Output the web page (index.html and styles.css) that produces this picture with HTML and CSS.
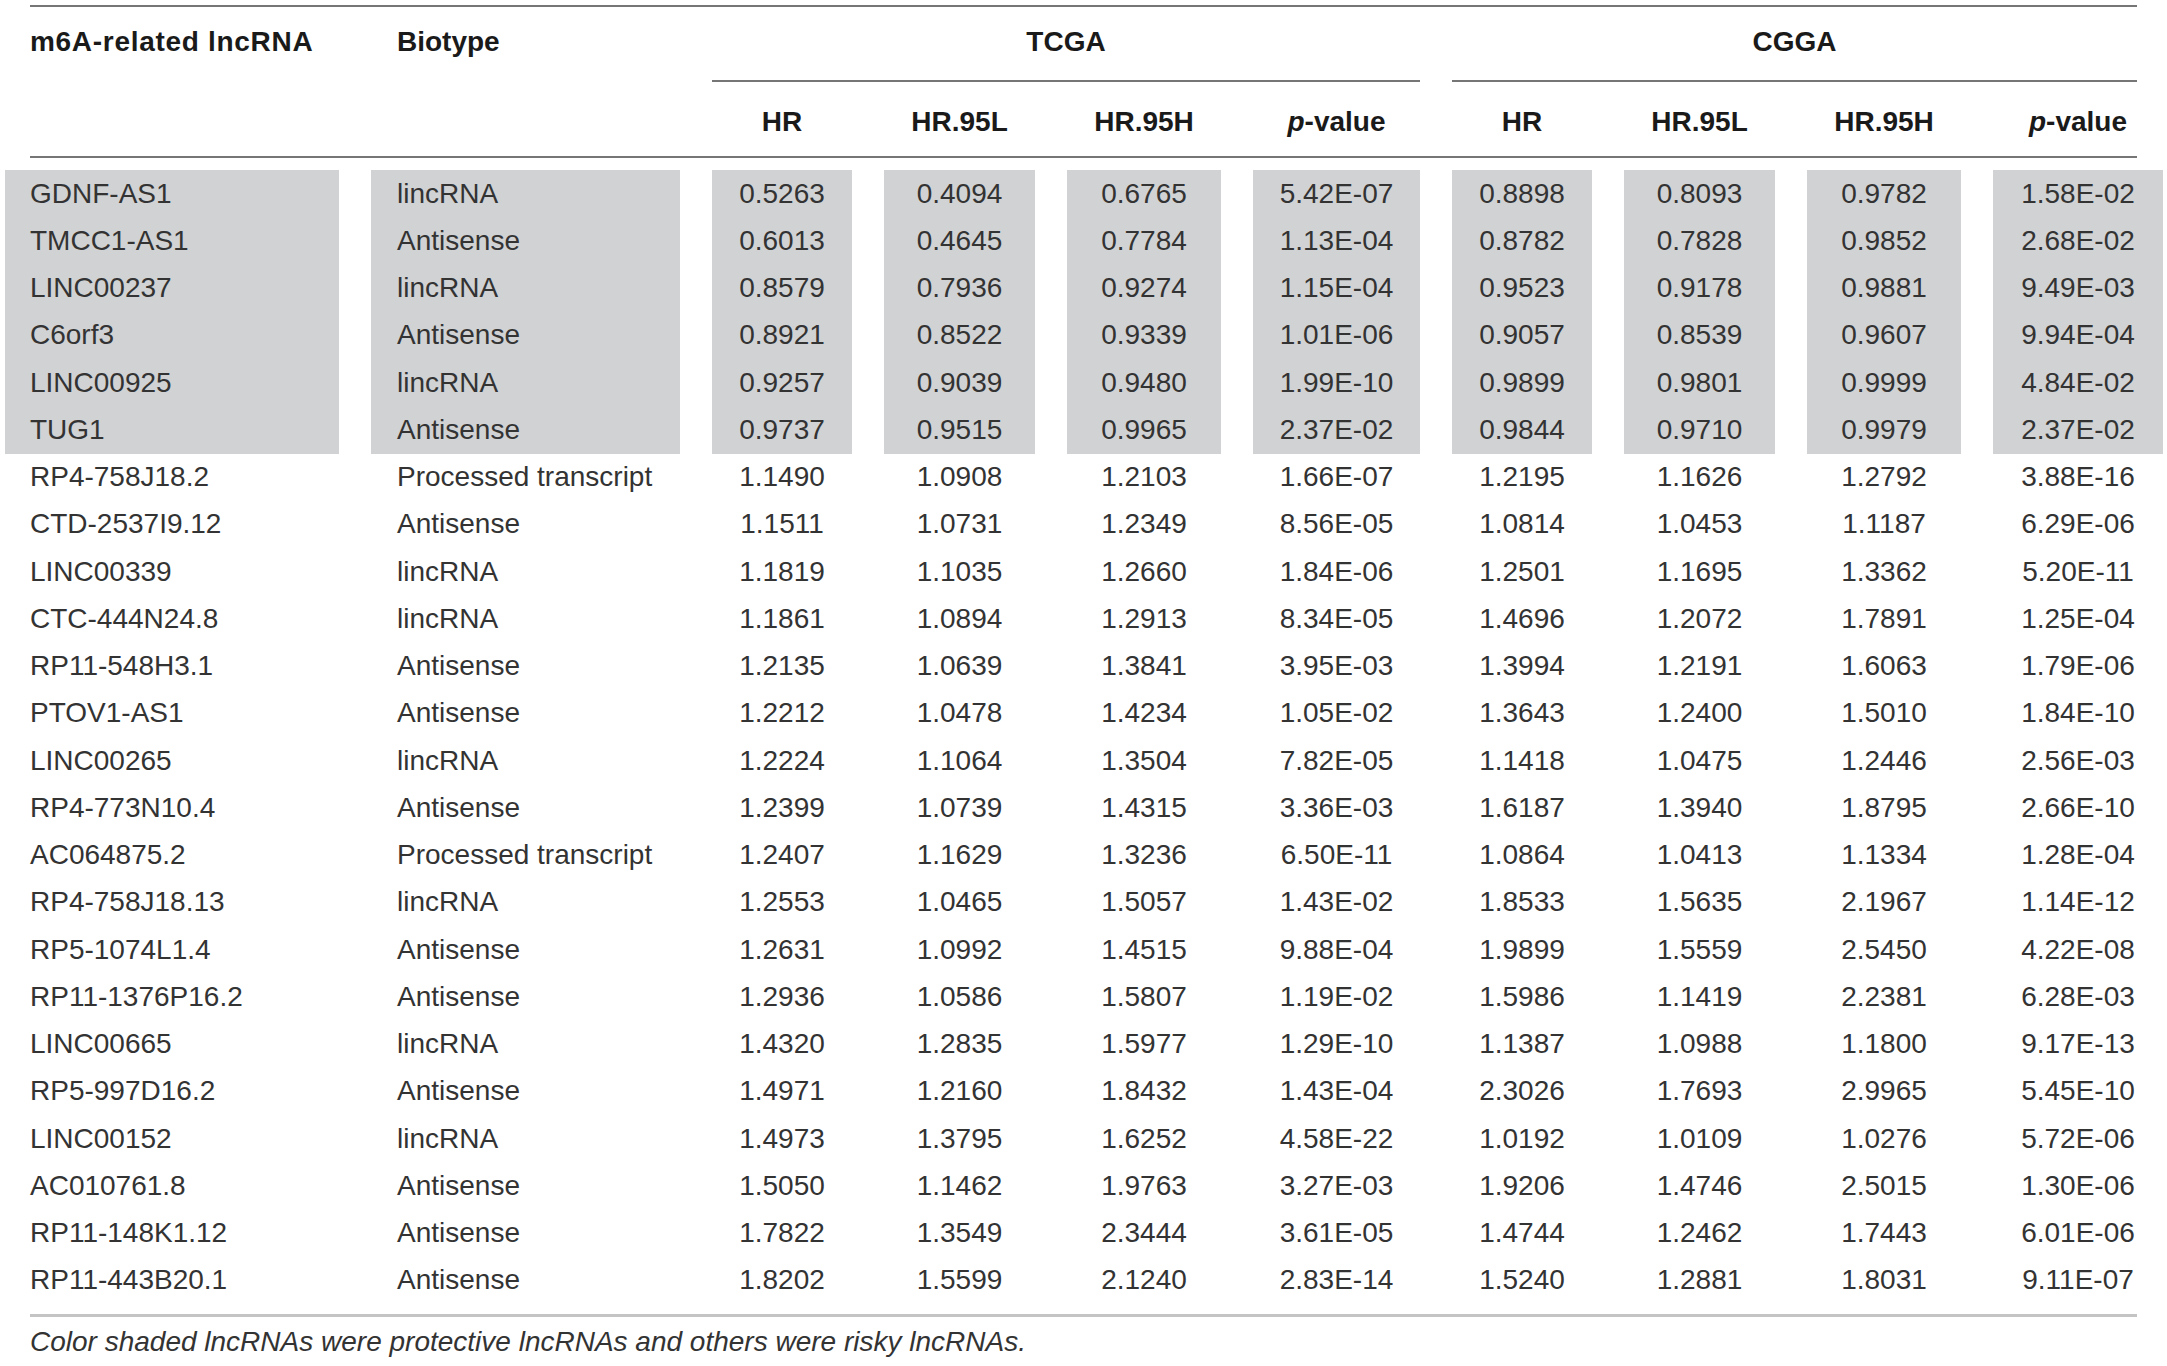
FILE: index.html
```html
<!DOCTYPE html>
<html lang="en">
<head>
<meta charset="utf-8">
<title>m6A-related lncRNA table</title>
<link rel="stylesheet" href="styles.css">
</head>
<body>
<div class="tbl">
  <div class="rule rule-top"></div>
  <div class="row head1">
    <div class="cell name wide">m6A-related lncRNA</div>
    <div class="cell bio">Biotype</div>
    <div class="cell grp tcga">TCGA</div>
    <div class="cell grp cgga">CGGA</div>
  </div>
  <div class="row head2">
    <div class="cell"></div>
    <div class="cell"></div>
    <div class="cell">HR</div>
    <div class="cell">HR.95L</div>
    <div class="cell">HR.95H</div>
    <div class="cell"><i>p</i>-value</div>
    <div class="cell">HR</div>
    <div class="cell">HR.95L</div>
    <div class="cell">HR.95H</div>
    <div class="cell"><i>p</i>-value</div>
  </div>
  <div class="rule rule-mid"></div>
  <div class="body">
    <div class="row data sh"><div class="cell name">GDNF-AS1</div><div class="cell bio">lincRNA</div><div class="cell">0.5263</div><div class="cell">0.4094</div><div class="cell">0.6765</div><div class="cell">5.42E-07</div><div class="cell">0.8898</div><div class="cell">0.8093</div><div class="cell">0.9782</div><div class="cell">1.58E-02</div></div>
    <div class="row data sh"><div class="cell name">TMCC1-AS1</div><div class="cell bio">Antisense</div><div class="cell">0.6013</div><div class="cell">0.4645</div><div class="cell">0.7784</div><div class="cell">1.13E-04</div><div class="cell">0.8782</div><div class="cell">0.7828</div><div class="cell">0.9852</div><div class="cell">2.68E-02</div></div>
    <div class="row data sh"><div class="cell name">LINC00237</div><div class="cell bio">lincRNA</div><div class="cell">0.8579</div><div class="cell">0.7936</div><div class="cell">0.9274</div><div class="cell">1.15E-04</div><div class="cell">0.9523</div><div class="cell">0.9178</div><div class="cell">0.9881</div><div class="cell">9.49E-03</div></div>
    <div class="row data sh"><div class="cell name">C6orf3</div><div class="cell bio">Antisense</div><div class="cell">0.8921</div><div class="cell">0.8522</div><div class="cell">0.9339</div><div class="cell">1.01E-06</div><div class="cell">0.9057</div><div class="cell">0.8539</div><div class="cell">0.9607</div><div class="cell">9.94E-04</div></div>
    <div class="row data sh"><div class="cell name">LINC00925</div><div class="cell bio">lincRNA</div><div class="cell">0.9257</div><div class="cell">0.9039</div><div class="cell">0.9480</div><div class="cell">1.99E-10</div><div class="cell">0.9899</div><div class="cell">0.9801</div><div class="cell">0.9999</div><div class="cell">4.84E-02</div></div>
    <div class="row data sh"><div class="cell name">TUG1</div><div class="cell bio">Antisense</div><div class="cell">0.9737</div><div class="cell">0.9515</div><div class="cell">0.9965</div><div class="cell">2.37E-02</div><div class="cell">0.9844</div><div class="cell">0.9710</div><div class="cell">0.9979</div><div class="cell">2.37E-02</div></div>
    <div class="row data"><div class="cell name">RP4-758J18.2</div><div class="cell bio">Processed transcript</div><div class="cell">1.1490</div><div class="cell">1.0908</div><div class="cell">1.2103</div><div class="cell">1.66E-07</div><div class="cell">1.2195</div><div class="cell">1.1626</div><div class="cell">1.2792</div><div class="cell">3.88E-16</div></div>
    <div class="row data"><div class="cell name">CTD-2537I9.12</div><div class="cell bio">Antisense</div><div class="cell">1.1511</div><div class="cell">1.0731</div><div class="cell">1.2349</div><div class="cell">8.56E-05</div><div class="cell">1.0814</div><div class="cell">1.0453</div><div class="cell">1.1187</div><div class="cell">6.29E-06</div></div>
    <div class="row data"><div class="cell name">LINC00339</div><div class="cell bio">lincRNA</div><div class="cell">1.1819</div><div class="cell">1.1035</div><div class="cell">1.2660</div><div class="cell">1.84E-06</div><div class="cell">1.2501</div><div class="cell">1.1695</div><div class="cell">1.3362</div><div class="cell">5.20E-11</div></div>
    <div class="row data"><div class="cell name">CTC-444N24.8</div><div class="cell bio">lincRNA</div><div class="cell">1.1861</div><div class="cell">1.0894</div><div class="cell">1.2913</div><div class="cell">8.34E-05</div><div class="cell">1.4696</div><div class="cell">1.2072</div><div class="cell">1.7891</div><div class="cell">1.25E-04</div></div>
    <div class="row data"><div class="cell name">RP11-548H3.1</div><div class="cell bio">Antisense</div><div class="cell">1.2135</div><div class="cell">1.0639</div><div class="cell">1.3841</div><div class="cell">3.95E-03</div><div class="cell">1.3994</div><div class="cell">1.2191</div><div class="cell">1.6063</div><div class="cell">1.79E-06</div></div>
    <div class="row data"><div class="cell name">PTOV1-AS1</div><div class="cell bio">Antisense</div><div class="cell">1.2212</div><div class="cell">1.0478</div><div class="cell">1.4234</div><div class="cell">1.05E-02</div><div class="cell">1.3643</div><div class="cell">1.2400</div><div class="cell">1.5010</div><div class="cell">1.84E-10</div></div>
    <div class="row data"><div class="cell name">LINC00265</div><div class="cell bio">lincRNA</div><div class="cell">1.2224</div><div class="cell">1.1064</div><div class="cell">1.3504</div><div class="cell">7.82E-05</div><div class="cell">1.1418</div><div class="cell">1.0475</div><div class="cell">1.2446</div><div class="cell">2.56E-03</div></div>
    <div class="row data"><div class="cell name">RP4-773N10.4</div><div class="cell bio">Antisense</div><div class="cell">1.2399</div><div class="cell">1.0739</div><div class="cell">1.4315</div><div class="cell">3.36E-03</div><div class="cell">1.6187</div><div class="cell">1.3940</div><div class="cell">1.8795</div><div class="cell">2.66E-10</div></div>
    <div class="row data"><div class="cell name">AC064875.2</div><div class="cell bio">Processed transcript</div><div class="cell">1.2407</div><div class="cell">1.1629</div><div class="cell">1.3236</div><div class="cell">6.50E-11</div><div class="cell">1.0864</div><div class="cell">1.0413</div><div class="cell">1.1334</div><div class="cell">1.28E-04</div></div>
    <div class="row data"><div class="cell name">RP4-758J18.13</div><div class="cell bio">lincRNA</div><div class="cell">1.2553</div><div class="cell">1.0465</div><div class="cell">1.5057</div><div class="cell">1.43E-02</div><div class="cell">1.8533</div><div class="cell">1.5635</div><div class="cell">2.1967</div><div class="cell">1.14E-12</div></div>
    <div class="row data"><div class="cell name">RP5-1074L1.4</div><div class="cell bio">Antisense</div><div class="cell">1.2631</div><div class="cell">1.0992</div><div class="cell">1.4515</div><div class="cell">9.88E-04</div><div class="cell">1.9899</div><div class="cell">1.5559</div><div class="cell">2.5450</div><div class="cell">4.22E-08</div></div>
    <div class="row data"><div class="cell name">RP11-1376P16.2</div><div class="cell bio">Antisense</div><div class="cell">1.2936</div><div class="cell">1.0586</div><div class="cell">1.5807</div><div class="cell">1.19E-02</div><div class="cell">1.5986</div><div class="cell">1.1419</div><div class="cell">2.2381</div><div class="cell">6.28E-03</div></div>
    <div class="row data"><div class="cell name">LINC00665</div><div class="cell bio">lincRNA</div><div class="cell">1.4320</div><div class="cell">1.2835</div><div class="cell">1.5977</div><div class="cell">1.29E-10</div><div class="cell">1.1387</div><div class="cell">1.0988</div><div class="cell">1.1800</div><div class="cell">9.17E-13</div></div>
    <div class="row data"><div class="cell name">RP5-997D16.2</div><div class="cell bio">Antisense</div><div class="cell">1.4971</div><div class="cell">1.2160</div><div class="cell">1.8432</div><div class="cell">1.43E-04</div><div class="cell">2.3026</div><div class="cell">1.7693</div><div class="cell">2.9965</div><div class="cell">5.45E-10</div></div>
    <div class="row data"><div class="cell name">LINC00152</div><div class="cell bio">lincRNA</div><div class="cell">1.4973</div><div class="cell">1.3795</div><div class="cell">1.6252</div><div class="cell">4.58E-22</div><div class="cell">1.0192</div><div class="cell">1.0109</div><div class="cell">1.0276</div><div class="cell">5.72E-06</div></div>
    <div class="row data"><div class="cell name">AC010761.8</div><div class="cell bio">Antisense</div><div class="cell">1.5050</div><div class="cell">1.1462</div><div class="cell">1.9763</div><div class="cell">3.27E-03</div><div class="cell">1.9206</div><div class="cell">1.4746</div><div class="cell">2.5015</div><div class="cell">1.30E-06</div></div>
    <div class="row data"><div class="cell name">RP11-148K1.12</div><div class="cell bio">Antisense</div><div class="cell">1.7822</div><div class="cell">1.3549</div><div class="cell">2.3444</div><div class="cell">3.61E-05</div><div class="cell">1.4744</div><div class="cell">1.2462</div><div class="cell">1.7443</div><div class="cell">6.01E-06</div></div>
    <div class="row data"><div class="cell name">RP11-443B20.1</div><div class="cell bio">Antisense</div><div class="cell">1.8202</div><div class="cell">1.5599</div><div class="cell">2.1240</div><div class="cell">2.83E-14</div><div class="cell">1.5240</div><div class="cell">1.2881</div><div class="cell">1.8031</div><div class="cell">9.11E-07</div></div>
  </div>
  <div class="rule rule-bottom"></div>
  <p class="caption">Color shaded lncRNAs were protective lncRNAs and others were risky lncRNAs.</p>
</div>
</body>
</html>
```

FILE: styles.css
```css
html, body {
  margin: 0;
  padding: 0;
  background: #ffffff;
}

body {
  font-family: "Liberation Sans", Arial, sans-serif;
  font-size: 28px;
  color: #333333;
}

.tbl {
  width: 2158px;
  margin: 5px 0 0 5px;
}

.row {
  display: grid;
  grid-template-columns: 334px 309px 140px 151px 154px 167px 140px 151px 154px 170px;
  column-gap: 32px;
}

.cell {
  display: flex;
  align-items: center;
  justify-content: center;
  white-space: nowrap;
}

.cell.name {
  justify-content: flex-start;
  padding-left: 25px;
}

.cell.bio {
  justify-content: flex-start;
  padding-left: 26px;
}

.rule {
  margin: 0 26px 0 25px;
  height: 0;
}

.rule-top {
  border-top: 2px solid #767676;
}

.rule-mid {
  border-top: 2px solid #767676;
  margin-bottom: 12px;
}

.rule-bottom {
  border-top: 3px solid #c4c4c4;
  margin-top: 10px;
}

.head1 .cell,
.head2 .cell {
  font-weight: bold;
  color: #1a1a1a;
}

.head1 .cell {
  height: 75px;
  box-sizing: border-box;
  padding-bottom: 5px;
}

.head1 .cell.wide {
  letter-spacing: 0.7px;
}

.head1 .grp {
  border-bottom: 2px solid #767676;
  padding-bottom: 3px;
}

.head1 .tcga {
  grid-column: 3 / 7;
}

.head1 .cgga {
  grid-column: 7 / 11;
  margin-right: 26px;
}

.head2 .cell {
  height: 74px;
  box-sizing: border-box;
  padding-top: 6px;
}

.head2 i {
  font-style: italic;
}

.row.data {
  height: 47.25px;
}

.row.sh .cell {
  background: #d1d2d4;
}

.caption {
  margin: 0;
  padding: 8px 0 0 25px;
  line-height: 34px;
  font-style: italic;
  color: #333333;
}
```
